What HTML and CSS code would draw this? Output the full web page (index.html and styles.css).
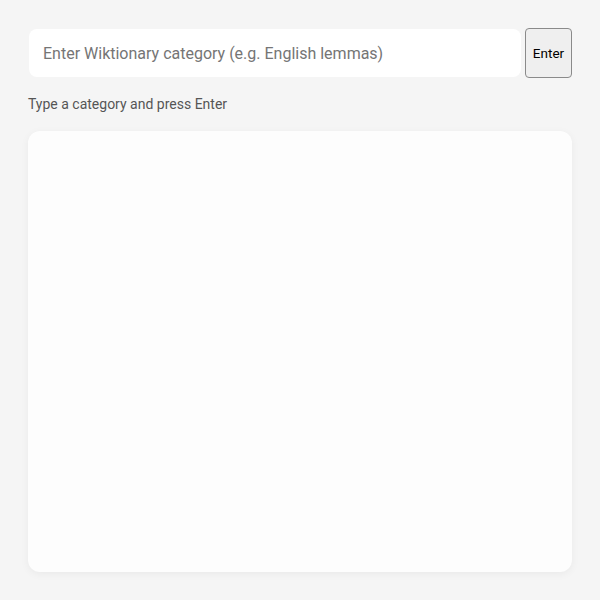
FILE: index.html
```html
<!DOCTYPE html>
<html>
<head>
<meta charset="utf-8">
<link rel="stylesheet" href="styles.css">
</head>
<body>
<div class="app">
  <div class="search-row">
    <input class="search-input" type="text" placeholder="Enter Wiktionary category (e.g. English lemmas)">
    <button class="enter-btn">Enter</button>
  </div>
  <div class="status">Type a category and press Enter</div>
  <div class="results"></div>
</div>
</body>
</html>
```

FILE: styles.css
```css
html, body {
  margin: 0;
  padding: 0;
  background: #f5f5f5;
  font-family: Roboto, "Liberation Sans", sans-serif;
}
.app {
  padding: 28px;
  display: flex;
  flex-direction: column;
}
.search-row {
  display: flex;
  align-items: center;
  gap: 4px;
}
.search-input {
  flex: 1;
  height: 48px;
  box-sizing: border-box;
  border: none;
  border-radius: 8px;
  background: #fff;
  padding: 0 14px;
  margin-left: 1px;
  font-family: Roboto, "Liberation Sans", sans-serif;
  font-size: 16px;
  color: #333;
  outline: none;
}
.search-input::placeholder {
  color: #757575;
}
.enter-btn {
  height: 50px;
  width: 47px;
  box-sizing: border-box;
  padding: 0;
  border: 1px solid #8a8a8a;
  border-radius: 4px;
  background: #efefef;
  font-family: Roboto, "Liberation Sans", sans-serif;
  font-size: 13.5px;
  color: #000;
}
.status {
  margin-top: 18px;
  font-size: 14px;
  line-height: 16px;
  color: #555;
}
.results {
  margin-top: 19px;
  height: 441px;
  background: #fdfdfd;
  border-radius: 12px;
  box-shadow: 0 2px 8px rgba(0,0,0,0.05);
}
```
